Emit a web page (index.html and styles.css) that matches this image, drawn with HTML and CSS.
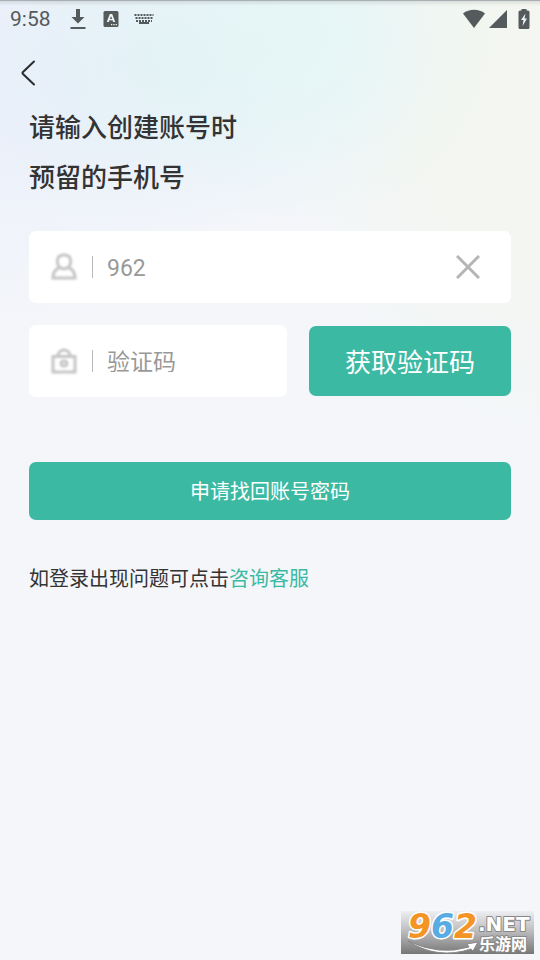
FILE: index.html
```html
<!DOCTYPE html>
<html lang="zh-CN">
<head>
<meta charset="utf-8">
<meta name="viewport" content="width=device-width, initial-scale=1">
<title>找回账号密码</title>
<link rel="stylesheet" href="styles.css">
</head>
<body>
<div class="page">
  <div class="status">
    <span class="time">9:58</span>
    <svg class="download" width="16" height="22" viewBox="0 0 16 22" aria-hidden="true"><path d="M6 1h4v8h4.500L8 15.500 1.500 9H6zM.5 19h15v2H.5z"/></svg>
    <svg class="ime" width="16" height="16" viewBox="0 0 16 16" aria-hidden="true"><rect x=".5" width="15" height="16" rx="1.500"/><path class="cut" fill-rule="evenodd" d="M6.800 3h2.400l3 8h-2l-.6-1.700H6.400L5.800 11h-2zM8 5L6.900 7.900h2.200zM8 13h1.300v1.300H8zM10.300 13h1.300v1.300h-1.300zM12.600 13h1.300v1.300h-1.300z"/></svg>
    <svg class="keys" width="20" height="12" viewBox="0 0 20 12" aria-hidden="true"><path class="dots" d="M.5 2h19M1.500 5h18M2 8h16"/><path d="M5 9h10v2H5z"/></svg>
    <span class="spacer"></span>
    <svg class="wifi" width="24" height="20" viewBox="0 0 24 20" aria-hidden="true"><path d="M1 4.500C7-.5 17-.5 23 4.500L12 19z"/></svg>
    <svg class="signal" width="20" height="20" viewBox="0 0 20 20" aria-hidden="true"><path d="M19 1v18H1z"/></svg>
    <svg class="battery" width="12" height="20" viewBox="0 0 12 20" aria-hidden="true"><path d="M3.500 0h5v1.500H10q1.500 0 1.500 1.500v15.500Q11.500 20 10 20H2Q.5 20 .5 18.500V3Q.5 1.500 2 1.500h1.500z"/><path class="cut" d="M7.500 4.500L3 11h2.500l-.9 6L9 9.500H6.500z"/></svg>
  </div>
  <header class="bar">
    <button class="back" type="button" aria-label="返回"><svg width="16" height="26" viewBox="0 0 16 26"><path d="M14 1.500L3 12Q2 13 3 14L14 24.500"/></svg></button>
  </header>
  <main class="content">
    <h1>请输入创建账号时<br>预留的手机号</h1>
    <form>
      <div class="field">
        <label for="phone" aria-label="手机号"><svg class="glyph" width="26" height="28" viewBox="0 0 26 28"><path d="M9 14.500C6 12 5.500 7 7.500 4Q9 2 13 2t5.500 2C20.500 7 20 12 17 14.500Q13 17 9 14.500C4.500 16 2 19 2 25h22c0-6-2.500-9-7-10.500"/></svg></label>
        <input id="phone" type="tel" value="962">
        <button class="clear" type="button" aria-label="清除"><svg width="24" height="24" viewBox="0 0 24 24"><path d="M1 1l22 22M23 1L1 23"/></svg></button>
      </div>
      <div class="row">
        <div class="field code">
          <label for="code" aria-label="验证码"><svg class="glyph" width="26" height="28" viewBox="0 0 26 28"><path d="M2 9.500h22V25H2zM7 9C7 1 19 1 19 9"/><ellipse cx="13" cy="16.500" rx="3" ry="2.500"/></svg></label>
          <input id="code" type="text" placeholder="验证码">
        </div>
        <button class="send" type="button">获取验证码</button>
      </div>
      <button class="submit" type="submit">申请找回账号密码</button>
    </form>
    <p class="help">如登录出现问题可点击<a href="#service">咨询客服</a></p>
  </main>
  <div class="mark">
    <svg width="133" height="43" viewBox="0 0 133 43" role="img" aria-label="962.NET 乐游网">
      <defs><linearGradient id="shade" x1="0" y1="0" x2="0" y2="1"><stop offset="0" stop-color="#eeeff2"/><stop offset=".5" stop-color="#b8b8ba"/><stop offset="1" stop-color="#777"/></linearGradient></defs>
      <rect width="133" height="43" fill="url(#shade)"/>
      <path class="swoosh" d="M7 30Q38 45 68 36l-2-3 11-2-5 9-2-2Q36 49 7 30z"/>
      <text class="digits" x="7" y="27"><tspan class="orange">9</tspan><tspan class="blue">6</tspan><tspan class="orange">2</tspan></text>
      <text class="net" x="77" y="20">.NET</text>
      <text class="site" x="78" y="39">乐游网</text>
    </svg>
  </div>
</div>
</body>
</html>
```
FILE: styles.css
```css
* { box-sizing: border-box; }

body {
  margin: 0;
  font-family: Roboto, "Noto Sans CJK SC", sans-serif;
  color: #333;
}

button, input {
  font: inherit;
  border: 0;
  margin: 0;
  padding: 0;
  background: none;
}

svg { display: block; }

.page {
  position: relative;
  min-height: 100vh;
  border-top: 1px solid #a9b0b3;
  background:
    linear-gradient(#00000018, transparent 5px),
    radial-gradient(ellipse 200px 190px at 54% 30px, #e5f6f5, #e5f6f500),
    radial-gradient(ellipse 260px 170px at 34% 60px, #e2f1f7, #e2f1f700),
    radial-gradient(ellipse 240px 350px at 98% 100px, #f3f6f1 45%, #f3f6f100),
    radial-gradient(ellipse 300px 240px at 0 80px, #ecf0fa 20%, #ecf0fa00),
    #f4f6fa;
}

.status {
  display: flex;
  align-items: center;
  height: 35px;
  padding: 0 10px;
  fill: #555a5c;
}

.time {
  font-size: 21px;
  color: #555a5c;
}

.download { margin-left: 19px; }
.ime { margin-left: 17px; }
.keys { margin-left: 15px; }
.spacer { flex: 1; }
.signal { margin-left: 2px; }
.battery { margin-left: 10px; }
.cut { fill: #eef6f5; }

.dots {
  stroke: #555a5c;
  stroke-width: 2;
  stroke-dasharray: 2 1;
}

.bar {
  display: flex;
  align-items: center;
  height: 67px;
  padding: 6px 20px 0;
}

.back svg {
  fill: none;
  stroke: #2a2c2e;
  stroke-width: 2;
  stroke-linecap: round;
}

.content { padding: 0 29px; }

h1 {
  margin: 0 0 28px;
  font-size: 26px;
  font-weight: 500;
  line-height: 50px;
}

.field {
  display: flex;
  align-items: center;
  height: 72px;
  padding: 0 31px 0 22px;
  background: #fff;
  border-radius: 7px;
}

.field label {
  padding-right: 15px;
}

.glyph {
  fill: none;
  stroke: #c5c5c5;
  stroke-width: 3;
  filter: blur(1px);
}

.field input {
  flex: 1;
  min-width: 0;
  height: 22px;
  padding: 2px 0 0 14px;
  border-left: 1px solid #bbb;
  border-radius: 0;
  font-size: 23px;
  color: #999;
  outline: 0;
}

.field input::placeholder {
  color: #999;
  opacity: 1;
}

.clear svg {
  stroke: #b5b5b5;
  stroke-width: 3;
}

.row {
  display: grid;
  grid-template-columns: minmax(0, 258fr) minmax(0, 202fr);
  align-items: center;
  gap: 22px;
  margin: 22px 0 65px;
}

.send, .submit {
  padding-bottom: 2px;
  color: #fff;
  background: #3cb9a2;
  border-radius: 7px;
}

.send {
  height: 70px;
  font-size: 26px;
}

.submit {
  display: block;
  width: 100%;
  height: 58px;
  font-size: 20px;
}

.help {
  margin: 44px 0 0;
  font-size: 20px;
  line-height: 30px;
}

.help a {
  color: #3cb9a2;
  text-decoration: none;
}

.mark {
  position: absolute;
  right: 6px;
  bottom: 6px;
}

.mark svg { overflow: visible; }

.mark text {
  font-family: "DejaVu Sans", "Noto Sans CJK SC", sans-serif;
  font-weight: 700;
  paint-order: stroke;
  stroke-linejoin: round;
}

.mark .digits {
  font-size: 33px;
  font-style: italic;
  stroke: #fff;
  stroke-width: 3;
}

.orange { fill: #f39425; }
.blue { fill: #58abe3; }

.mark .net, .mark .site {
  fill: #fff;
  stroke: #888;
  stroke-width: 2;
}

.mark .net { font-size: 20px; }

.mark .site { font-size: 16px; }

.swoosh {
  fill: #fff;
  stroke: #888;
}
```
